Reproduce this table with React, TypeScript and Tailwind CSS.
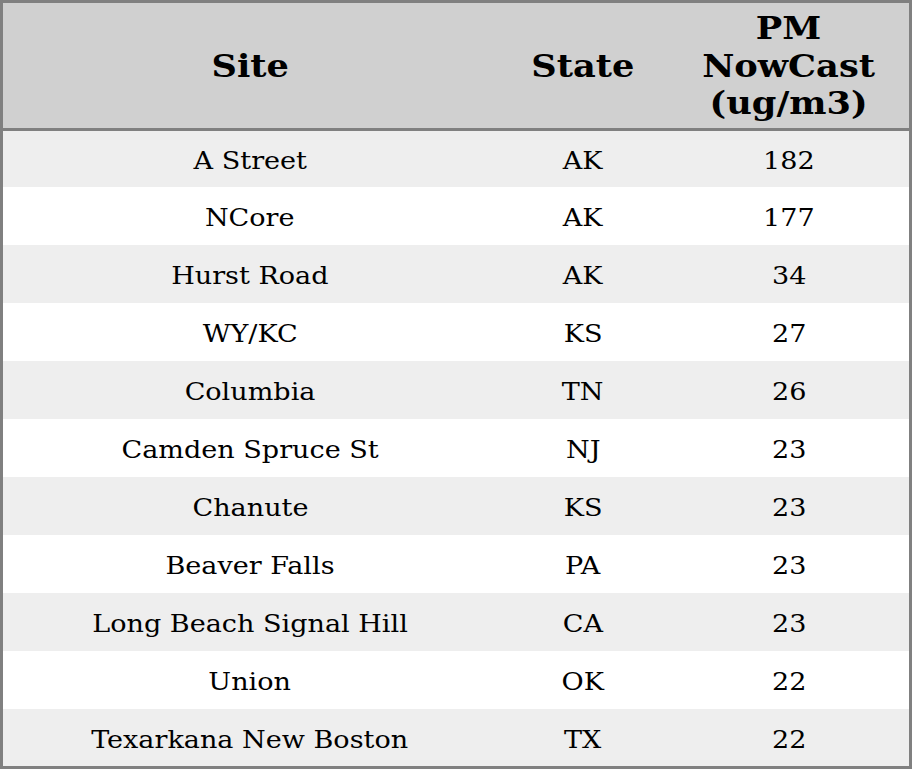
const rows: [string, string, string][] = [
  ["A Street", "AK", "182"],
  ["NCore", "AK", "177"],
  ["Hurst Road", "AK", "34"],
  ["WY/KC", "KS", "27"],
  ["Columbia", "TN", "26"],
  ["Camden Spruce St", "NJ", "23"],
  ["Chanute", "KS", "23"],
  ["Beaver Falls", "PA", "23"],
  ["Long Beach Signal Hill", "CA", "23"],
  ["Union", "OK", "22"],
  ["Texarkana New Boston", "TX", "22"],
];

const cols = "grid grid-cols-[494px_172px_240px]";

export default function App() {
  return (
    <div className="w-[912px] h-[769px] bg-white font-['DejaVu_Serif',serif] text-black">
      <div className="border-[3px] border-[#808080] h-full flex flex-col">
        {/* HEADER */}
        <div className={`${cols} h-[128px] shrink-0 bg-[#d0d0d0] border-b-[3px] border-[#808080] text-[32px] font-bold leading-[37.5px]`}>
          <div className="flex items-center justify-center text-center">
            <span className="inline-block scale-x-[1.1] pt-[2px]">Site</span>
          </div>
          <div className="flex items-center justify-center text-center">
            <span className="inline-block scale-x-[1.1] pt-[2px]">State</span>
          </div>
          <div className="flex items-center justify-center text-center">
            <span className="inline-block scale-x-[1.1] pt-[2px]">
              PM
              <br />
              NowCast
              <br />
              (ug/m3)
            </span>
          </div>
        </div>

        {/* ROWS */}
        {rows.map(([site, state, pm], i) => (
          <div
            key={i}
            className={`${cols} ${i === 0 ? "h-[56px]" : i === rows.length - 1 ? "flex-1" : "h-[58px]"} ${
              i % 2 === 0 ? "bg-[#eeeeee]" : "bg-white"
            } text-[24px] leading-none`}
          >
            <div className="flex items-center justify-center pt-1">
              <span className="inline-block scale-x-[1.127]">{site}</span>
            </div>
            <div className="flex items-center justify-center pt-1">
              <span className="inline-block scale-x-[1.127]">{state}</span>
            </div>
            <div className="flex items-center justify-center pt-1">
              <span className="inline-block scale-x-[1.127]">{pm}</span>
            </div>
          </div>
        ))}
      </div>
    </div>
  );
}
